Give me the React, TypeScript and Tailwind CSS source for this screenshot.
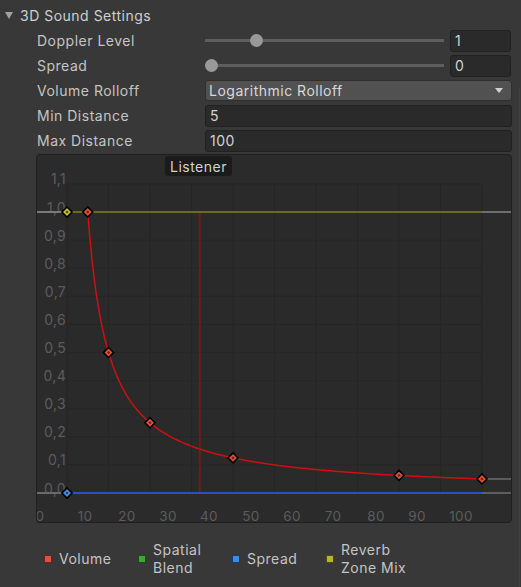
import React from "react";

const X = (v: number) => 31 + 4.15 * v;
const Y = (a: number) => 339 - 281 * a;

function Diamond({ x, y, fill, dot }: { x: number; y: number; fill: string; dot: string }) {
  const r = 5;
  return (
    <g>
      <polygon points={`${x},${y - r} ${x + r},${y} ${x},${y + r} ${x - r},${y}`} fill={fill} stroke="#000" strokeWidth={1.6} />
      <polygon points={`${x},${y - 1.6} ${x + 1.6},${y} ${x},${y + 1.6} ${x - 1.6},${y}`} fill={dot} />
    </g>
  );
}

function Graph() {
  const pts: string[] = [];
  for (let d = 5; d <= 100.001; d += 0.5) {
    pts.push(`${X(d).toFixed(2)},${Y(5 / d).toFixed(2)}`);
  }
  const curve = "M" + pts.join(" L");
  const yLabels = ["1,1", "1,0", "0,9", "0,8", "0,7", "0,6", "0,5", "0,4", "0,3", "0,2", "0,1", "0,0"];
  const xLabelPos = [4, 49, 91, 132, 173, 215, 256, 297, 340, 381, 425];
  return (
    <div className="relative ml-[36px] mt-px w-[476px] h-[369px] rounded-[4px] bg-[#2b2b2b]">
      <svg width={476} height={369} className="block overflow-visible">
        <rect x={31} y={30} width={415} height={309} fill="#2a2a2a" />
        {Array.from({ length: 11 }).map((_, i) => (
          <line key={"v" + i} x1={X(i * 10)} x2={X(i * 10)} y1={30} y2={339} stroke="#252525" strokeWidth={1} />
        ))}
        {Array.from({ length: 12 }).map((_, i) => (
          <line key={"h" + i} x1={31} x2={446} y1={Y(i / 10)} y2={Y(i / 10)} stroke="#262626" strokeWidth={1} />
        ))}
        {yLabels.map((t, i) => (
          <text
            key={t}
            x={30}
            y={Y((11 - i) / 10) - 5}
            textAnchor="end"
            dominantBaseline="central"
            fill="#5c5c5c"
            fontSize={14}
            letterSpacing={0.3}
            fontFamily="Inter, 'Noto Sans', sans-serif"
          >
            {t}
          </text>
        ))}
        {xLabelPos.map((x, i) => (
          <text
            key={"x" + i}
            x={x}
            y={362}
            textAnchor="middle"
            dominantBaseline="central"
            fill="#5c5c5c"
            fontSize={13.5}
            letterSpacing={0.3}
            fontFamily="Inter, 'Noto Sans', sans-serif"
          >
            {i * 10}
          </text>
        ))}
        {/* gray extensions */}
        <line x1={0} x2={31} y1={58} y2={58} stroke="#7a7a7a" strokeWidth={2} />
        <line x1={0} x2={31} y1={339} y2={339} stroke="#6a6a6a" strokeWidth={2} />
        <line x1={446} x2={476} y1={58} y2={58} stroke="#6e6e6e" strokeWidth={2} />
        <line x1={446} x2={476} y1={Y(0.05)} y2={Y(0.05)} stroke="#5e5e5e" strokeWidth={2} />
        <line x1={446} x2={476} y1={339} y2={339} stroke="#5e5e5e" strokeWidth={2} />
        {/* listener */}
        <line x1={X(32)} x2={X(32)} y1={58} y2={339} stroke="#6e1c1c" strokeWidth={2} />
        {/* reverb zone mix */}
        <line x1={31} x2={446} y1={58} y2={58} stroke="#6b6b1e" strokeWidth={2} />
        {/* spread */}
        <line x1={31} x2={446} y1={339} y2={339} stroke="#2552c6" strokeWidth={2} />
        {/* volume */}
        <path d={curve} fill="none" stroke="#cf1010" strokeWidth={1.5} />
        <Diamond x={X(0)} y={58} fill="#c2c232" dot="#4a4a10" />
        <Diamond x={X(0)} y={339} fill="#4a8de6" dot="#173c7a" />
        {[5, 10, 20, 40, 80, 100].map((d) => (
          <Diamond key={d} x={X(d)} y={Y(5 / d)} fill="#e2503c" dot="#7a1a10" />
        ))}
        <rect x={0.5} y={0.5} width={475} height={368} rx={4} fill="none" stroke="#1f1f1f" />
      </svg>
      <div className="absolute left-[129px] top-[2px] w-[67px] h-[20px] rounded-[3px] bg-[#1b1b1b] flex items-center justify-center text-[#d2d2d2] text-[14px]">
        Listener
      </div>
    </div>
  );
}

function Row({ label, children }: { label: string; children: React.ReactNode }) {
  return (
    <div className="flex items-center h-[25px]">
      <div className="w-[205px] pl-[37px] shrink-0">{label}</div>
      <div className="w-[307px] flex items-center">{children}</div>
    </div>
  );
}

function Slider({ pos }: { pos: number }) {
  return (
    <div className="relative w-[239px] h-[22px] flex items-center">
      <div className="w-full h-[3px] bg-[#5e5e5e]" />
      <div
        className="absolute top-[4px] w-[13px] h-[13px] rounded-full bg-[#999999]"
        style={{ left: `${pos * (239 - 13)}px` }}
      />
    </div>
  );
}

function NumField({ value, className }: { value: string; className: string }) {
  return (
    <div className={`h-[22px] rounded-[3px] bg-[#2a2a2a] border border-[#212121] flex items-center pl-[4px] text-[#d2d2d2] ${className}`}>
      {value}
    </div>
  );
}

function LegendItem({ color, border, children }: { color: string; border: string; children: React.ReactNode }) {
  return (
    <div className="w-[94px] flex items-center">
      <div className={`w-[8px] h-[8px] border ${color} ${border} mr-[7px] shrink-0`} />
      <div className="leading-[18px]">{children}</div>
    </div>
  );
}

export default function App() {
  return (
    <div className="relative w-[521px] h-[587px] bg-[#383838] text-[#c4c4c4] text-[14px] tracking-[0.5px] overflow-hidden font-['Inter','Noto_Sans',sans-serif]">
      <div className="absolute right-px top-[88px] bottom-0 w-px bg-[#414141]" />
      <div className="pt-[3px]">
        <div className="flex items-center h-[25px] pl-[5px]">
          <svg width={8} height={7} className="mr-[7px]">
            <polygon points="0,0 8,0 4,7" fill="#a0a0a0" />
          </svg>
          <span className="text-[#cfcfcf]">3D Sound Settings</span>
        </div>
        <Row label="Doppler Level">
          <Slider pos={0.2} />
          <NumField value="1" className="ml-[6px] w-[61px]" />
        </Row>
        <Row label="Spread">
          <Slider pos={0} />
          <NumField value="0" className="ml-[6px] w-[61px]" />
        </Row>
        <Row label="Volume Rolloff">
          <div className="w-[307px] h-[21px] rounded-[3px] bg-[#515151] border border-[#2f2f2f] flex items-center justify-between pl-[3px] pr-[8px] text-[#d8d8d8]">
            <span>Logarithmic Rolloff</span>
            <svg width={8} height={5}>
              <polygon points="0,0 8,0 4,5" fill="#d0d0d0" />
            </svg>
          </div>
        </Row>
        <Row label="Min Distance">
          <NumField value="5" className="w-[307px]" />
        </Row>
        <Row label="Max Distance">
          <NumField value="100" className="w-[307px]" />
        </Row>
      </div>
      <Graph />
      <div className="flex items-center ml-[44px] mt-[18px] h-[36px]">
        <LegendItem color="bg-[#e2503c]" border="border-[#5a2a22]">Volume</LegendItem>
        <LegendItem color="bg-[#3fa535]" border="border-[#1e4a1a]">
          Spatial
          <br />
          Blend
        </LegendItem>
        <LegendItem color="bg-[#3c8ce6]" border="border-[#1c3a66]">Spread</LegendItem>
        <LegendItem color="bg-[#b5b52f]" border="border-[#4a4a16]">
          Reverb
          <br />
          Zone Mix
        </LegendItem>
      </div>
    </div>
  );
}
